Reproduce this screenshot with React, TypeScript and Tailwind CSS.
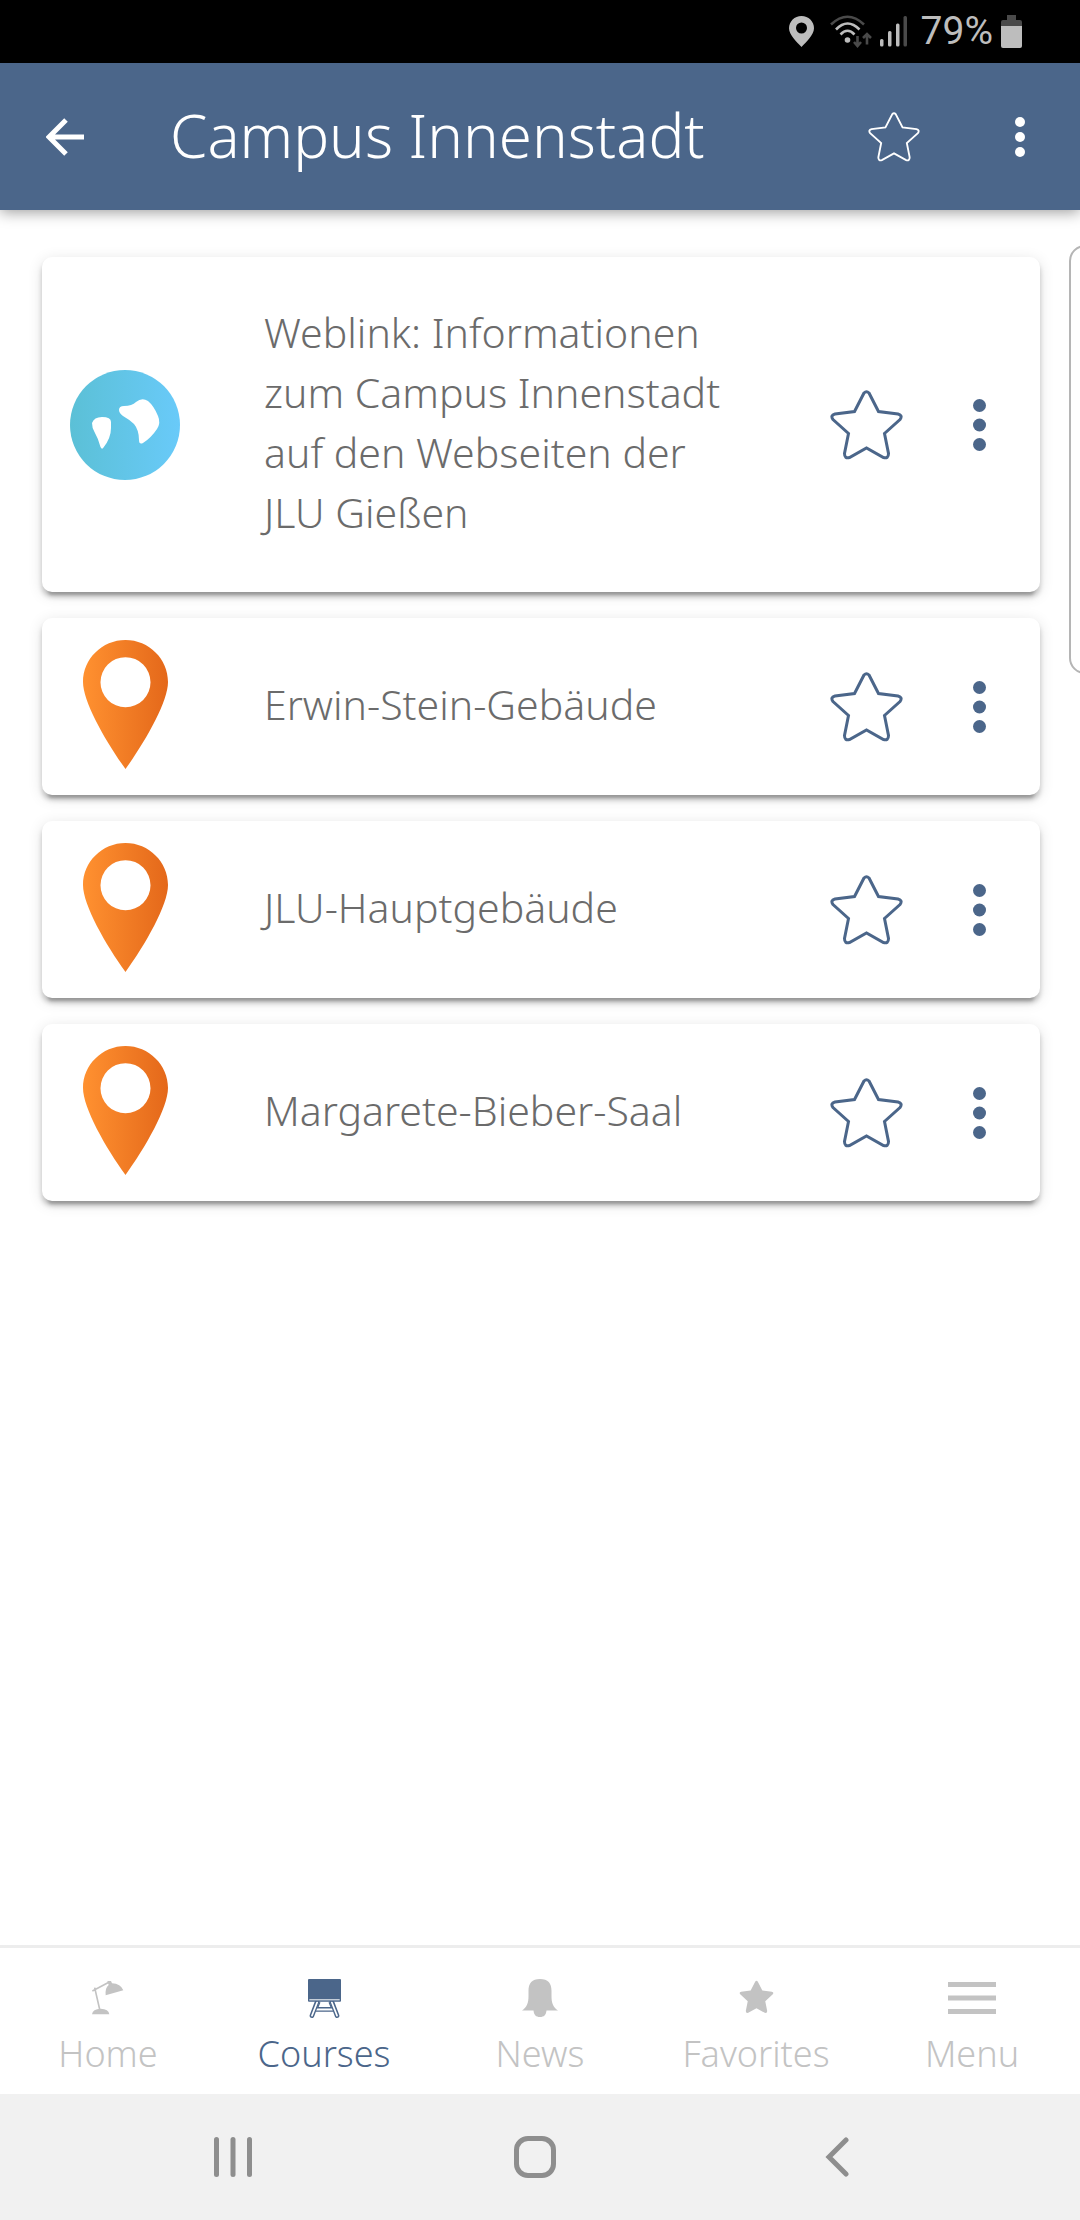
import { useState } from "react";
import type { ReactNode } from "react";
import clsx from "clsx";

const STAR_PATH =
  "M33 3Q35.5 .5 38 3L47.5 21.5L67 24Q72 25.5 69 29.5L53.5 43.5L57.5 63.5Q57.5 69 52.5 67.5L35.5 58L18.5 67.5Q13.5 69 13.5 63.5L17.5 43.5L2 29.5Q-1 25.5 4 24L23.5 21.5Z";

type Entry = { title: string; kind: "link" | "place" };

const entries: Entry[] = [
  {
    title: "Weblink: Informationen zum Campus Innenstadt auf den Webseiten der JLU Gießen",
    kind: "link",
  },
  { title: "Erwin-Stein-Gebäude", kind: "place" },
  { title: "JLU-Hauptgebäude", kind: "place" },
  { title: "Margarete-Bieber-Saal", kind: "place" },
];

function StarOutline({ className, strokeWidth = 3 }: { className?: string; strokeWidth?: number }) {
  return (
    <svg viewBox="-1 0 73 70" className={className} fill="none" stroke="currentColor" strokeWidth={strokeWidth} aria-hidden="true">
      <path d={STAR_PATH} />
    </svg>
  );
}

function Dots({ className }: { className?: string }) {
  return (
    <svg viewBox="0 0 13 52" className={className} fill="currentColor" aria-hidden="true">
      <circle cx="6.5" cy="6.5" r="6.5" />
      <circle cx="6.5" cy="26" r="6.5" />
      <circle cx="6.5" cy="45.5" r="6.5" />
    </svg>
  );
}

function GlobeIcon() {
  return (
    <svg viewBox="0 0 110 110" className="size-[110px]" aria-hidden="true">
      <defs>
        <linearGradient id="globe" x1="0" x2="1">
          <stop offset="0" stopColor="#5bc0d6" />
          <stop offset="1" stopColor="#69caf9" />
        </linearGradient>
      </defs>
      <circle cx="55" cy="55" r="55" fill="url(#globe)" />
      <g fill="#fff">
        <path d="M22 53Q24 47 32 47Q41 47 41 52V58Q41 68 33.5 77.5Q32 80 30.5 77Q28 68 24.5 62Q22 58 22 53Z" />
        <path d="M49 40Q49 36 54 36Q62 36 66 32Q72 27 78 31Q84 36 88 46Q91 53 87 59Q81 68 73 73Q69 75 69 70Q69 60 64 54Q60 50 53 46Q49 43 49 40Z" />
      </g>
    </svg>
  );
}

function PinIcon() {
  return (
    <svg viewBox="0 0 85 133" className="h-[133px] w-[85px]" aria-hidden="true">
      <defs>
        <linearGradient id="pin" x1="0" x2="1">
          <stop offset="0" stopColor="#ff9130" />
          <stop offset="1" stopColor="#e4681a" />
        </linearGradient>
      </defs>
      <path
        fill="url(#pin)"
        fillRule="evenodd"
        d="M42.5 0C66 0 85 19 85 42C85 62 62 102 42.5 129C23 102 0 62 0 42C0 19 19 0 42.5 0ZM42.5 17.2a25 25 0 1 0 0 50a25 25 0 1 0 0-50Z"
      />
    </svg>
  );
}

function StatusBar() {
  return (
    <div className="flex h-[63px] items-center justify-end bg-black pr-[58px] text-[#bdbdbd]">
      <svg viewBox="0 0 25 31" className="h-[31px] w-[25px]" fill="currentColor" aria-hidden="true">
        <path
          fillRule="evenodd"
          d="M12.5 0C19.5 0 25 5.5 25 12.2C25 19 17 26 12.5 31C8 26 0 19 0 12.2C0 5.5 5.5 0 12.5 0ZM12.5 6.5a5.5 5.5 0 1 0 0 11a5.5 5.5 0 1 0 0-11Z"
        />
      </svg>
      <svg viewBox="0 0 42 33" className="ml-4 h-[33px] w-[42px]" fill="none" strokeWidth="2.6" aria-hidden="true">
        <path d="M1 9.5Q17.5-6 34 9.5" stroke="#4a4a4a" />
        <path d="M6 14.5Q17.5 2.5 29.5 14.5M10.5 19.5Q17.5 12 24.5 19.5" stroke="currentColor" />
        <circle cx="17.5" cy="25" r="2.8" fill="currentColor" />
        <path d="M27.5 21V31M24 27L27.5 31L31 27M37 29.5V19M33 23L37 19L41 23" stroke="#4a4a4a" />
      </svg>
      <svg viewBox="0 0 27 31" className="ml-2 h-[31px] w-[27px]" fill="currentColor" aria-hidden="true">
        <rect y="23" width="3.5" height="7.5" rx="1.5" />
        <rect x="8" y="15" width="3.5" height="15.5" rx="1.5" />
        <rect x="16" y="7.5" width="3.5" height="23" rx="1.5" />
        <rect x="23.5" y="0" width="3.5" height="30.5" rx="1.5" fill="#4a4a4a" />
      </svg>
      <span className="ml-3.5 font-['Roboto',sans-serif] text-[39px] leading-none">79%</span>
      <svg viewBox="0 0 21 33" className="ml-2 h-[33px] w-[21px]" aria-hidden="true">
        <path d="M6 0H15V5H19Q21 5 21 7V12H0V7Q0 5 2 5H6Z" fill="#4a4a4a" />
        <path d="M0 11H21V31Q21 33 19 33H2Q0 33 0 31Z" fill="currentColor" />
      </svg>
    </div>
  );
}

function Header() {
  return (
    <header className="relative z-10 flex h-[147px] items-center bg-[#4b668a] text-white shadow-[0_2px_14px_rgba(0,0,0,0.4)]">
      <button type="button" aria-label="Back" className="flex w-[130px] justify-center">
        <svg viewBox="0 0 38 38" className="size-[38px]" fill="none" stroke="currentColor" strokeWidth="5" aria-hidden="true">
          <path d="M38 19H4M20 2L3 19L20 36" />
        </svg>
      </button>
      <h1 className="ml-10 flex-1 pb-1 text-[60px] leading-[80px] font-light">Campus Innenstadt</h1>
      <button type="button" aria-label="Add to favorites" className="flex w-[130px] justify-center">
        <StarOutline className="h-[50px] w-[52px]" strokeWidth={2.6} />
      </button>
      <button type="button" aria-label="More options" className="flex w-[121px] justify-center">
        <Dots className="h-10 w-[10px]" />
      </button>
    </header>
  );
}

function EntryCard({ title, kind }: Entry) {
  return (
    <li
      className={clsx(
        "flex items-center rounded-[10px] bg-white shadow-[0_9px_3px_-6px_rgba(0,0,0,0.2),0_5px_5px_rgba(0,0,0,0.2),0_3px_15px_rgba(0,0,0,0.12)]",
        kind === "link" ? "min-h-[335px]" : "min-h-[177px]"
      )}
    >
      <span className="flex w-[166px] shrink-0 justify-center">{kind === "link" ? <GlobeIcon /> : <PinIcon />}</span>
      <a href="#" className="ml-14 flex-1 pr-14 pb-1.5 text-[41px] leading-[60px] font-light text-[#6b6b6b]">
        {title}
      </a>
      <button type="button" aria-label={`Add ${title} to favorites`} className="flex w-[106px] shrink-0 justify-center text-[#4b668a]">
        <StarOutline className="h-[70px] w-[73px]" />
      </button>
      <button type="button" aria-label={`Options for ${title}`} className="flex w-[121px] shrink-0 justify-center text-[#4b668a]">
        <Dots className="h-[52px] w-[13px]" />
      </button>
    </li>
  );
}

const tabs: { name: string; icon: ReactNode }[] = [
  {
    name: "Home",
    icon: (
      <svg viewBox="0 0 96 102" className="h-[34px] w-8" fill="currentColor" aria-hidden="true">
        <path d="M0 100Q2 84 26 83Q50 84 52 100Z" />
        <path d="M23 85L8 20M1 30L52 3" fill="none" stroke="currentColor" strokeWidth="5" />
        <path d="M46 0H57L60 7Q86 8 94 28L41 43Q39 20 50 12Z" />
      </svg>
    ),
  },
  {
    name: "Courses",
    icon: (
      <svg viewBox="0 0 100 118" className="h-[39px] w-[33px]" fill="none" aria-hidden="true">
        <path d="M28 68L12 111M72 68L88 111" stroke="currentColor" strokeWidth="14" strokeLinecap="round" />
        <path d="M28 70L12 111M72 70L88 111" stroke="#fff" strokeWidth="5" strokeLinecap="round" />
        <path d="M36 70L29 87H71L64 70M24 97H76" stroke="currentColor" strokeWidth="4" />
        <rect width="100" height="69" rx="3" fill="currentColor" />
        <path d="M4 63H96" stroke="#fff" strokeWidth="3" />
      </svg>
    ),
  },
  {
    name: "News",
    icon: (
      <svg viewBox="0 0 36 38" className="h-[38px] w-9" fill="currentColor" aria-hidden="true">
        <path d="M18 0C26 0 29.5 4 29.5 12V17C29.5 24 31 28 36 31.5H24.5C24 36 22 38 18 38C14 38 12 36 11.5 31.5H0C5 28 6.5 24 6.5 17V12C6.5 4 10 0 18 0Z" />
      </svg>
    ),
  },
  {
    name: "Favorites",
    icon: (
      <svg viewBox="0 0 71 74" className="h-9 w-[35px]" fill="currentColor" aria-hidden="true">
        <path d={STAR_PATH} />
      </svg>
    ),
  },
  {
    name: "Menu",
    icon: (
      <svg viewBox="0 0 48 32" className="h-8 w-12" fill="currentColor" aria-hidden="true">
        <path d="M0 0H48V5H0ZM0 13.5H48V18.5H0ZM0 27H48V32H0Z" />
      </svg>
    ),
  },
];

function TabBar() {
  const [active, setActive] = useState("Courses");

  return (
    <nav className="grid h-[149px] grid-cols-5 border-t-3 border-[#ededed] bg-white">
      {tabs.map((tab) => (
        <button
          key={tab.name}
          type="button"
          aria-current={tab.name === active ? "page" : undefined}
          onClick={() => setActive(tab.name)}
          className={clsx(
            "flex flex-col items-center pt-[30px] text-4xl font-light",
            tab.name === active ? "text-[#4b668a]" : "text-[#c3c3c3]"
          )}
        >
          <span className="flex h-10 items-center">{tab.icon}</span>
          <span className="mt-3 leading-[48px]">{tab.name}</span>
        </button>
      ))}
    </nav>
  );
}

function SystemNav() {
  return (
    <div className="grid h-[126px] grid-cols-3 bg-[#f1f1f1] pr-[92px] pl-[82px] text-[#8e8e8e]">
      <button type="button" aria-label="Recent apps" className="flex items-center justify-center">
        <svg viewBox="0 0 38 40" className="h-10 w-[38px]" fill="currentColor" aria-hidden="true">
          <rect width="5" height="40" rx="2.5" />
          <rect x="16.5" width="5" height="40" rx="2.5" />
          <rect x="33" width="5" height="40" rx="2.5" />
        </svg>
      </button>
      <button type="button" aria-label="Home screen" className="flex items-center justify-center">
        <span className="size-[42px] rounded-[14px] border-5 border-current" />
      </button>
      <button type="button" aria-label="System back" className="flex items-center justify-center">
        <svg viewBox="0 0 24 40" className="h-10 w-6" fill="none" stroke="currentColor" strokeWidth="5" strokeLinecap="round" aria-hidden="true">
          <path d="M21 3L4 20L21 37" />
        </svg>
      </button>
    </div>
  );
}

export default function App() {
  return (
    <div className="relative flex min-h-screen flex-col overflow-hidden bg-white font-['Noto_Sans',sans-serif]">
      <StatusBar />
      <Header />
      <main className="flex-1 pt-[47px] pr-10 pb-10 pl-[42px]">
        <ul className="flex flex-col gap-[26px]">
          {entries.map((entry) => (
            <EntryCard key={entry.title} {...entry} />
          ))}
        </ul>
      </main>
      {/* Edge panel handle, peeks in from the right side of the screen */}
      <div className="absolute top-[245px] right-0 h-[429px] w-[11px] overflow-hidden">
        <div className="h-full w-10 rounded-2xl border-2 border-[#b5b5b5] bg-white" />
      </div>
      <TabBar />
      <SystemNav />
    </div>
  );
}
